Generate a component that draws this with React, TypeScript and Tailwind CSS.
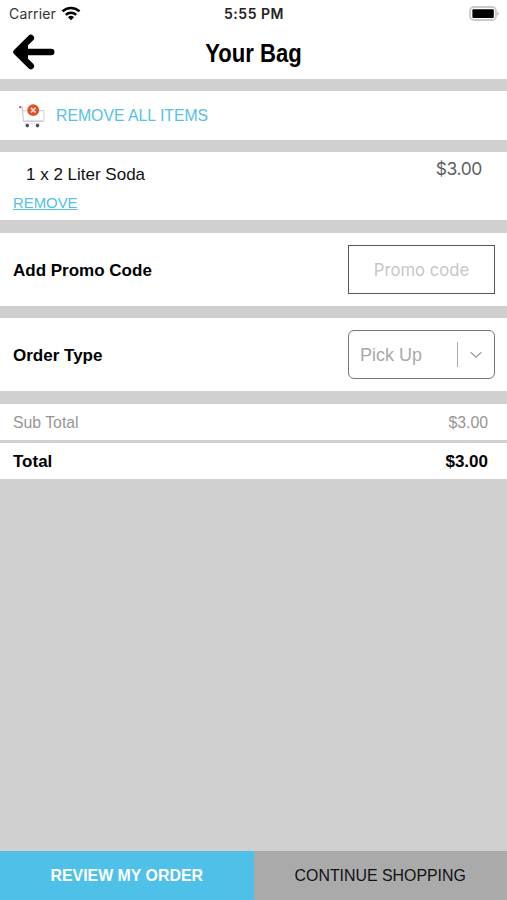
import { ReactNode } from 'react'
import cn from 'clsx'

function StatusBar() {
  return (
    <div className="grid h-[27px] grid-cols-3 items-center pt-px pr-[8px] pl-[9px] font-['Inter',sans-serif] text-[14px] leading-none">
      <div className="flex items-center gap-[5px] text-[#333]">
        <span className="tracking-[0.15px]">Carrier</span>
        <svg viewBox="0 0 20 15" className="-mt-[2px] h-[15px] w-[20px]">
          <g fill="none" stroke="#000" strokeWidth="2.6">
            <path d="M1.5 5.4a12.2 12.2 0 0 1 17 0" />
            <path d="M4.8 8.9a7.5 7.5 0 0 1 10.4 0" />
          </g>
          <path d="M7 11.2a4.4 4.4 0 0 1 6 0l-3 3z" />
        </svg>
      </div>
      <span className="text-center font-semibold tracking-[0.5px] text-[#222]">
        5:55 PM
      </span>
      <svg viewBox="0 0 30 15" className="-mt-[2px] h-[15px] w-[30px] justify-self-end">
        <rect x="1" y="1" width="26" height="13" rx="4" fill="#fff" stroke="#c9c9c9" strokeWidth="1.8" />
        <rect x="3.4" y="3.2" width="21.4" height="8.8" rx="1" />
        <path d="M28.4 5.4v4.4c1.6-.6 1.6-3.8 0-4.4z" fill="#b5b5b5" />
      </svg>
    </div>
  )
}

function CartIcon() {
  return (
    <svg viewBox="0 0 28 26" className="h-[26px] w-[28px]" fill="none">
      <path d="M2 4.2h2.3l1.2 14.3h19.7" stroke="#c8c8d4" strokeWidth="1.1" />
      <path d="M4.7 7.6h21.2v10.2H5.5" stroke="#d5d5da" strokeWidth="1.1" />
      <circle cx="2.2" cy="4.1" r="1.2" fill="#c95a5a" />
      <path d="M7 20.6h15" stroke="#e0e0e4" />
      <circle cx="9.3" cy="22.6" r="1.8" fill="#46506e" />
      <circle cx="19.5" cy="22.6" r="1.8" fill="#46506e" />
      <circle cx="15.2" cy="7.2" r="5.9" fill="#dc552b" />
      <path d="M12.9 4.9l4.6 4.6m0-4.6l-4.6 4.6" stroke="#f6d9cf" strokeWidth="1.7" />
    </svg>
  )
}

function FieldRow({ label, children }: { label: string; children: ReactNode }) {
  return (
    <div className="flex h-[73px] items-center justify-between bg-white pr-3 pl-[13px]">
      <span className="pt-px text-[17px] font-bold">{label}</span>
      {children}
    </div>
  )
}

function TotalRow({
  label,
  amount,
  isTotal,
}: {
  label: string
  amount: string
  isTotal?: boolean
}) {
  return (
    <div
      className={cn(
        'flex h-9 items-center justify-between bg-white pr-[19px] pl-[13px]',
        isTotal ? 'text-[17px] font-bold' : 'pt-px text-[15.8px] text-[#969696]',
      )}
    >
      <span>{label}</span>
      <span>{amount}</span>
    </div>
  )
}

export default function App() {
  return (
    <div className="flex h-[900px] w-[507px] flex-col overflow-hidden bg-[#d0d0d0] font-['Liberation_Sans',Arial,sans-serif] leading-none text-black">
      <header className="h-[79px] bg-white">
        <StatusBar />
        <div className="grid h-[52px] grid-cols-[60px_1fr_60px] items-center">
          <svg viewBox="0 0 42 36" className="mb-[2px] ml-[13px] h-9 w-[42px]" fill="none" stroke="#000" strokeWidth="6.6" strokeLinecap="round" strokeLinejoin="round">
            <path d="M17.8 4L3.6 18l14.2 14M5 18h33.2" />
            <path d="M15 9.5L6 18l9 8.5z" fill="#000" stroke="none" />
          </svg>
          <h1 className="scale-x-[0.84] text-center text-[26.3px] font-bold">Your Bag</h1>
        </div>
      </header>

      <button className="mt-3 flex h-[49px] items-center bg-white pl-[18px] text-[15.8px] text-[#55c1e8]">
        <CartIcon />
        <span className="ml-[10px]">REMOVE ALL ITEMS</span>
      </button>

      <div className="mt-3 flex h-[68px] justify-between bg-white pr-[25px] pl-[13px]">
        <div className="flex flex-col items-start">
          <span className="mt-[14px] ml-[13px] text-[17px] text-[#111]">1 x 2 Liter Soda</span>
          <button className="mt-[13px] text-[14.9px] text-[#55c1e8] underline underline-offset-1">
            REMOVE
          </button>
        </div>
        <span className="mt-[8px] font-['Inter',sans-serif] text-[17.5px] tracking-[-0.4px] text-[#5e5e5e]">
          $3.00
        </span>
      </div>

      <div className="mt-[13px]">
        <FieldRow label="Add Promo Code">
          <input
            placeholder="Promo code"
            className="h-[49px] w-[147px] border border-[#555] text-center font-['Inter',sans-serif] text-[16.7px] placeholder:text-[#c7c7c7]"
          />
        </FieldRow>
      </div>

      <div className="mt-3">
        <FieldRow label="Order Type">
          <button className="flex h-[49px] w-[147px] items-center rounded-[6px] border border-[#777] pl-[11px] text-[18px] text-[#a9a9a9]">
            <span className="pt-px">Pick Up</span>
            <span className="mr-3 ml-auto h-[25px] w-px bg-[#aaa]" />
            <svg viewBox="0 0 12 8" className="mr-3 h-2 w-3" fill="none" stroke="#999" strokeWidth="1.2">
              <path d="M.7 1.3L6 6.3l5.3-5" />
            </svg>
          </button>
        </FieldRow>
      </div>

      <div className="mt-[13px] flex flex-col gap-[3px]">
        <TotalRow label="Sub Total" amount="$3.00" />
        <TotalRow label="Total" amount="$3.00" isTotal />
      </div>

      <footer className="mt-auto grid h-[49px] grid-cols-2 text-[15.9px]">
        <button className="bg-[#4fc1e9] font-bold text-white">REVIEW MY ORDER</button>
        <button className="bg-[#aaa] text-[#111]">CONTINUE SHOPPING</button>
      </footer>
    </div>
  )
}
